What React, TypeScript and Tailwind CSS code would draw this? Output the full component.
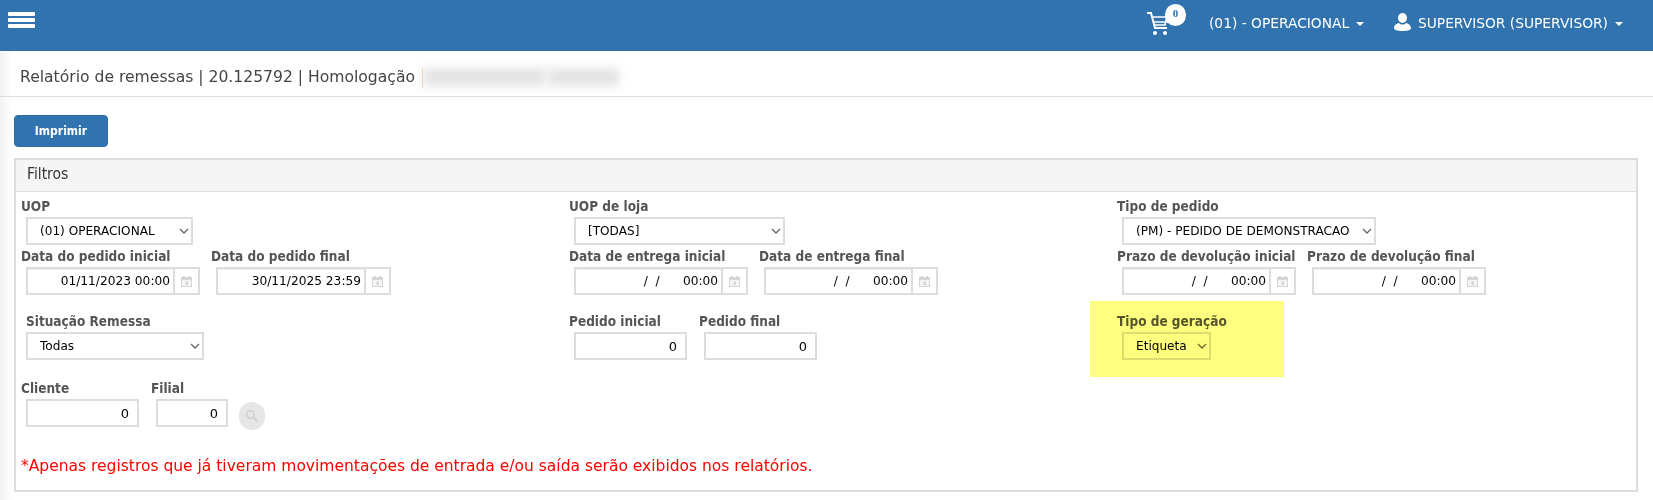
import React from "react";

const sans = "font-['DejaVu_Sans','Liberation_Sans',sans-serif]";
const cond = "font-['DejaVu_Sans_Condensed','DejaVu_Sans',sans-serif] [font-stretch:condensed]";
const labelCls = `block h-[21px] ${cond} font-bold text-[13.5px] leading-[21px] text-[#555555] whitespace-nowrap`;

function Caret() {
  return <span className="inline-block ml-[7px] w-0 h-0 border-x-[4px] border-x-transparent border-t-[4px] border-t-white align-middle" />;
}

function Cal() {
  return (
    <svg width="11" height="11" viewBox="0 0 11 11" className="block">
      <rect x="0.500" y="1.500" width="10" height="9" fill="#f4f4f4" stroke="#d6d6d6" />
      <rect x="0" y="1" width="11" height="3" fill="#d6d6d6" />
      <rect x="2" y="0" width="1.500" height="2" fill="#cccccc" />
      <rect x="7.500" y="0" width="1.500" height="2" fill="#cccccc" />
      <rect x="4.500" y="5.500" width="2.500" height="3.500" fill="#d6d6d6" />
    </svg>
  );
}

function Sel({ value, w }: { value: string; w: string }) {
  return (
    <div className={`relative ${w}`}>
      <select
        defaultValue={value}
        className={`w-full h-[28px] block appearance-none border-2 border-[#dddddd] bg-white pl-[12px] text-[12.100px] text-black ${sans}`}
      >
        <option>{value}</option>
      </select>
      <svg width="10" height="6" viewBox="0 0 10 6" fill="none" stroke="#666666" strokeWidth="1.300" className="absolute right-[4px] top-[11px] pointer-events-none">
        <path d="M1 1l4 4 4-4" />
      </svg>
    </div>
  );
}

function Txt({ value, w }: { value: string; w: string }) {
  return (
    <input
      readOnly
      value={value}
      className={`${w} h-[28px] block border-2 border-[#dddddd] bg-white pr-[8px] text-right text-[13px] text-black ${sans}`}
    />
  );
}

function DateField({ label, value, w }: { label: string; value: string; w: string }) {
  return (
    <div>
      <label className={labelCls}>{label}</label>
      <div className="flex pl-[5px]">
        <input
          readOnly
          value={value}
          className={`${w} h-[28px] block border-2 border-r-0 border-[#dddddd] bg-white pr-[3px] text-right text-[12.200px] text-black ${sans} shadow-[inset_0_1px_1px_rgba(0,0,0,0.075)]`}
        />
        <span className="w-[27px] h-[28px] flex items-center justify-center border-2 border-[#dddddd] bg-white">
          <Cal />
        </span>
      </div>
    </div>
  );
}

function Field({ label, children, flush }: { label: string; children: React.ReactNode; flush?: boolean }) {
  return (
    <div>
      <label className={`${labelCls} ${flush ? "pl-[5px]" : ""}`}>{label}</label>
      <div className="pl-[5px]">{children}</div>
    </div>
  );
}

const emptyDate = "/  /      00:00";

export default function App() {
  return (
    <div className={`w-[1653px] h-[500px] overflow-hidden bg-white ${sans}`}>
      <header className="h-[51px] bg-[#3173ae] flex items-start justify-between text-white text-[13.8px]">
        <div className="ml-[8px] mt-[12px] w-[27px] flex flex-col gap-[2px]">
          <span className="h-[4px] bg-white rounded-[1px]" />
          <span className="h-[4px] bg-white rounded-[1px]" />
          <span className="h-[4px] bg-white rounded-[1px]" />
        </div>
        <div className="flex items-start h-full pr-[30px]">
          <div className="relative w-[39px] h-full mr-[23px]">
            <svg width="22" height="24" viewBox="0 0 22 24" className="absolute left-0 top-[12px]" fill="none" stroke="white" strokeWidth="2">
              <path d="M0 1h4l4 15h12" />
              <path d="M5 5h17M6 10h15M20 4l-2 9H7" strokeWidth="1.600" />
              <circle cx="8" cy="21" r="2" fill="white" stroke="none" />
              <circle cx="18" cy="21" r="2" fill="white" stroke="none" />
            </svg>
            <span className="absolute left-[18px] top-[4px] w-[21px] h-[22px] rounded-full bg-white text-[#3173ae] text-[11px] font-bold leading-[18px] text-center font-['Liberation_Serif',serif]">0</span>
          </div>
          <div className="mt-[14px] leading-[18px] whitespace-nowrap w-[185px]">(01) - OPERACIONAL<Caret /></div>
          <svg width="17" height="18" viewBox="0 0 17 18" className="mt-[13px] mr-[7px]" fill="white">
            <ellipse cx="8.500" cy="5" rx="4.500" ry="5" />
            <path d="M0 15c0-3 3-4.500 5-5 2 2 5 2 7 0 2 .5 5 2 5 5 0 2-3 3-8.500 3S0 17 0 15z" />
          </svg>
          <div className="mt-[14px] leading-[18px] whitespace-nowrap">SUPERVISOR (SUPERVISOR)<Caret /></div>
        </div>
      </header>

      <main className="h-[449px] bg-[linear-gradient(to_right,#f3f3f3,#ffffff_12px)]">
        <div className="h-[46px] border-b border-[#dddddd] pl-[20px] pt-[16px] flex items-start text-[15.600px] leading-[20px] text-[#444444]">
          <span>Relatório de remessas | 20.125792 | Homologação</span>
          <span className="ml-[7px] mt-[1px] w-[1px] h-[20px] bg-[#f5cfa0]" />
          <span className="mt-[1px] w-[122px] h-[18px] bg-[#e4e4e4] blur-[5px]" />
          <span className="ml-[2px] mt-[1px] w-[72px] h-[18px] bg-[#e4e4e4] blur-[5px]" />
        </div>

        <div className="pl-[14px] pr-[15px]">
          <button className={`mt-[18px] w-[94px] h-[32px] rounded-[4px] border border-[#2e6da4] bg-[#3173ae] text-white text-[12px] font-bold ${cond}`}>
            Imprimir
          </button>

          <section className="mt-[11px] h-[334px] border-2 border-[#dddddd]">
            <div className={`h-[32px] bg-[#f5f5f5] border-b border-[#dddddd] pl-[11px] text-[15.500px] leading-[28px] text-[#333333] ${cond} font-normal`}>
              Filtros
            </div>

            <div className="grid grid-cols-[548px_548px_1fr] grid-rows-[50px_49px_65px_67px] pl-[5px] pt-[4px]">
              <Field label="UOP"><Sel value="(01) OPERACIONAL" w="w-[167px]" /></Field>
              <Field label="UOP de loja"><Sel value="[TODAS]" w="w-[211px]" /></Field>
              <Field label="Tipo de pedido"><Sel value="(PM) - PEDIDO DE DEMONSTRACAO" w="w-[254px]" /></Field>

              <div className="flex gap-[11px]">
                <DateField label="Data do pedido inicial" value="01/11/2023 00:00" w="w-[147px]" />
                <DateField label="Data do pedido final" value="30/11/2025 23:59" w="w-[148px]" />
              </div>
              <div className="flex gap-[11px]">
                <DateField label="Data de entrega inicial" value={emptyDate} w="w-[147px]" />
                <DateField label="Data de entrega final" value={emptyDate} w="w-[147px]" />
              </div>
              <div className="flex gap-[11px]">
                <DateField label="Prazo de devolução inicial" value={emptyDate} w="w-[147px]" />
                <DateField label="Prazo de devolução final" value={emptyDate} w="w-[147px]" />
              </div>

              <div className="pt-[16px]">
                <Field label="Situação Remessa" flush><Sel value="Todas" w="w-[178px]" /></Field>
              </div>
              <div className="pt-[16px] flex gap-[12px]">
                <Field label="Pedido inicial"><Txt value="0" w="w-[113px]" /></Field>
                <Field label="Pedido final"><Txt value="0" w="w-[113px]" /></Field>
              </div>
              <div className="pt-[16px] relative">
                <Field label="Tipo de geração"><Sel value="Etiqueta" w="w-[89px]" /></Field>
                <span className="absolute left-[-27px] top-[6px] w-[194px] h-[76px] bg-[#ffff7f] mix-blend-multiply" />
              </div>

              <div className="pt-[18px] col-span-3 flex gap-[12px]">
                <Field label="Cliente"><Txt value="0" w="w-[113px]" /></Field>
                <Field label="Filial"><Txt value="0" w="w-[72px]" /></Field>
                <span className="mt-[24px] -ml-[1px] w-[26px] h-[28px] rounded-full bg-[#e6e6e6] flex items-center justify-center">
                  <svg width="12" height="12" viewBox="0 0 12 12" fill="none" stroke="#cfcfcf" strokeWidth="1.500">
                    <circle cx="4.500" cy="4.500" r="3.700" />
                    <path d="M7.500 7.500L11.500 11.500" strokeWidth="2" />
                  </svg>
                </span>
              </div>
            </div>

            <p className="pl-[5px] mt-[29px] text-[15.500px] leading-[20px] text-[#ff0000]">
              *Apenas registros que já tiveram movimentações de entrada e/ou saída serão exibidos nos relatórios.
            </p>
          </section>
        </div>
      </main>
    </div>
  );
}
